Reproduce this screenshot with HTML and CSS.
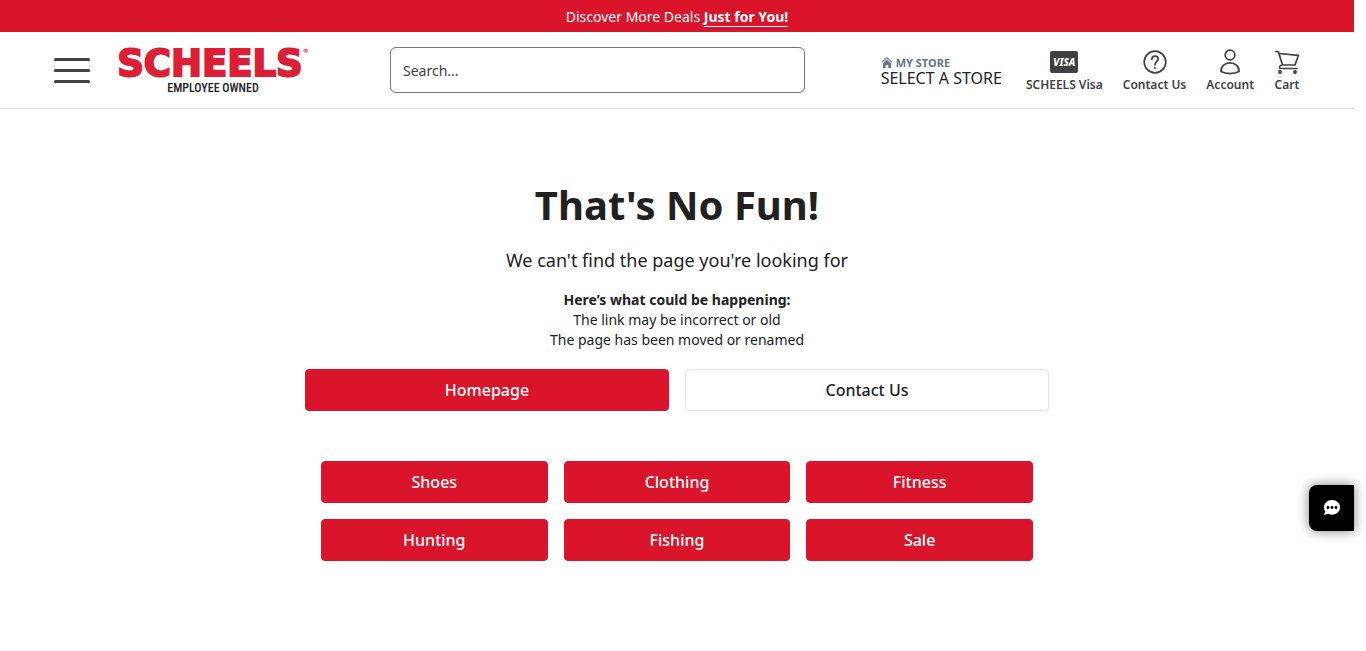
FILE: index.html
```html
<!DOCTYPE html>
<html lang="en">
<head>
<meta charset="utf-8">
<meta name="viewport" content="width=device-width, initial-scale=1">
<title>Page Not Found | SCHEELS</title>
<link rel="stylesheet" href="styles.css">
</head>
<body>
<div class="promo">Discover More Deals <a href="#">Just for You!</a></div>
<header class="header">
  <button class="menu" aria-label="Menu"><span></span><span></span><span></span></button>
  <a class="logo" href="#">
    <span class="logo-name">SCHEELS<sup>®</sup></span>
    <span class="logo-tag">EMPLOYEE OWNED</span>
  </a>
  <form class="search"><input type="text" placeholder="Search..." aria-label="Search"></form>
  <button class="store">
    <span class="store-label">
      <svg width="12" height="12" viewBox="0 0 12 12" fill="currentColor"><path d="M6 0 11.500 5 10.800 5.800 6 1.500 1.200 5.800 .5 5zM6 2.700l4 3.600V11H7.300V8H4.700v3H2V6.300z"/></svg>
      MY STORE
    </span>
    <span class="store-name">SELECT A STORE</span>
  </button>
  <nav class="nav">
    <a href="#">
      <span class="icon"><span class="visa">VISA</span></span>
      SCHEELS Visa
    </a>
    <a href="#">
      <svg width="28" height="28" viewBox="0 0 28 28" fill="none" stroke="#404042" stroke-width="1.700"><circle cx="14" cy="14" r="10.800"/><path d="M10.900 11.300C10.900 9.300 12.200 8.100 14 8.100 15.900 8.100 17.200 9.300 17.200 11 17.200 13.500 14 13.600 14 16.800" stroke-linecap="round"/><circle cx="14" cy="20" r="1" fill="#404042" stroke="none"/></svg>
      Contact Us
    </a>
    <a href="#">
      <svg width="28" height="28" viewBox="0 0 28 28" fill="none" stroke="#404042" stroke-width="1.700"><circle cx="14" cy="7" r="4.800"/><path d="M5 23.600C4.600 18.500 8.600 14.900 14 14.900S23.400 18.500 23 23.600C18 26.200 10 26.200 5 23.600Z" stroke-linejoin="round"/></svg>
      Account
    </a>
    <a href="#">
      <svg width="26" height="28" viewBox="2 0 26 28" fill="none" stroke="#404042" stroke-width="1.700" stroke-linecap="round" stroke-linejoin="round"><path d="M3.500 3.500H6.300L10.500 17M7 5.500 26.500 7.300 23 17H9.800C7 17.500 6.800 20.500 9 20.500H25"/><circle cx="8" cy="24" r="1.900" fill="#404042" stroke="none"/><circle cx="23" cy="24" r="1.900" fill="#404042" stroke="none"/></svg>
      Cart
    </a>
  </nav>
</header>
<main class="main">
  <h1>That's No Fun!</h1>
  <p class="lead">We can't find the page you're looking for</p>
  <p class="reasons"><strong>Here’s what could be happening:</strong><br>The link may be incorrect or old<br>The page has been moved or renamed</p>
  <div class="actions">
    <a class="btn" href="#">Homepage</a>
    <a class="btn btn-outline" href="#">Contact Us</a>
  </div>
  <div class="categories">
    <a class="btn" href="#">Shoes</a>
    <a class="btn" href="#">Clothing</a>
    <a class="btn" href="#">Fitness</a>
    <a class="btn" href="#">Hunting</a>
    <a class="btn" href="#">Fishing</a>
    <a class="btn" href="#">Sale</a>
  </div>
</main>
<button class="chat" aria-label="Chat">
  <svg width="18" height="18" viewBox="0 0 18 18"><path d="M9 1C13.600 1 17 4.200 17 8.300S13.600 15.700 9 15.700C7.600 15.700 6.300 15.400 5.200 14.800L1 16 2.200 12.400C1.400 11.200 1 9.800 1 8.300 1 4.200 4.400 1 9 1Z" fill="#fff"/><g fill="#000"><circle cx="5" cy="8.500" r="1.400"/><circle cx="9" cy="8.500" r="1.400"/><circle cx="13" cy="8.500" r="1.400"/></g></svg>
</button>
</body>
</html>
```
FILE: styles.css
```css
* { box-sizing: border-box; }
body {
  margin: 0;
  padding-right: 12px;
  background: #fff;
  color: #212121;
  font: 14px/20px "Noto Sans", sans-serif;
}
a { color: inherit; text-decoration: none; }
button { border: 0; padding: 0; background: none; color: inherit; font: inherit; cursor: pointer; }
svg { display: block; }

.promo {
  padding: 7px 16px 5px;
  background: #da142b;
  color: #fff;
  text-align: center;
}
.promo a { border-bottom: 1px solid #fff; font-weight: 700; }

.header {
  display: flex;
  align-items: center;
  height: 77px;
  padding: 0 54px;
  border-bottom: 1px solid #dcdcec;
}
.menu { display: flex; flex-direction: column; gap: 8px; width: 36px; }
.menu span { height: 3px; border-radius: 2px; background: #404042; }
.logo {
  display: flex;
  flex-direction: column;
  align-items: center;
  width: 198px;
  margin-left: 24px;
  padding-top: 3px;
  white-space: nowrap;
}
.logo-name {
  color: #dc1f34;
  font: 700 37px/32px "DejaVu Sans", sans-serif;
  -webkit-text-stroke: 2px #dc1f34;
}
.logo-name sup { font-size: 6px; line-height: 6px; vertical-align: top; -webkit-text-stroke: 0; }
.logo-tag {
  color: #212121;
  font: 500 12px/16px "Roboto Condensed", "Liberation Sans Narrow", "DejaVu Sans Condensed", sans-serif;
}
.search { flex: 1; margin: 0 76px 0 78px; }
.search input {
  display: block;
  width: 100%;
  height: 46px;
  padding: 0 12px;
  border: 1px solid #757575;
  border-radius: 6px;
  background: #fff;
  color: #212121;
  font: inherit;
}
.search input::placeholder { color: #404042; opacity: 1; }
.store { padding-top: 2px; text-align: left; white-space: nowrap; }
.store-label {
  display: flex;
  align-items: center;
  gap: 3px;
  color: #64748b;
  font-size: 11px;
  font-weight: 700;
  line-height: 14px;
}
.store-name { display: block; font-size: 16px; line-height: 17px; }
.nav { display: flex; gap: 20px; margin-left: 24px; padding-top: 2px; }
.nav a {
  display: flex;
  flex-direction: column;
  align-items: center;
  color: #404042;
  font-size: 12px;
  font-weight: 600;
  line-height: 18px;
  white-space: nowrap;
}
.icon { padding: 3px 0; }
.visa {
  display: block;
  width: 28px;
  border-radius: 2px;
  background: #404042;
  color: #fff;
  font-size: 10px;
  font-style: italic;
  font-weight: 800;
  line-height: 22px;
  text-align: center;
}

.main { max-width: 744px; margin: 0 auto; padding: 68px 0 48px; text-align: center; }
h1 { margin: 0; font-size: 40px; line-height: 56px; }
.lead { margin: 14px 0 16px; font-size: 18px; line-height: 27px; }
.reasons { margin: 0; }
.actions { display: grid; grid-template-columns: 1fr 1fr; gap: 16px; margin-top: 19px; }
.categories {
  display: grid;
  grid-template-columns: repeat(3, 1fr);
  gap: 16px;
  margin-top: 50px;
  padding: 0 16px;
}
.btn {
  padding: 8px 16px;
  border: 1px solid #da142b;
  border-radius: 4px;
  background: #da142b;
  color: #fff;
  font-size: 16px;
  font-weight: 500;
  line-height: 24px;
}
.btn-outline { border-color: #e5e5e5; background: #fff; color: #212121; }

.chat {
  position: fixed;
  right: 12px;
  bottom: 120px;
  display: flex;
  align-items: center;
  justify-content: center;
  width: 45px;
  height: 46px;
  border-radius: 8px 0 0 8px;
  background: #000;
  box-shadow: 0 0 12px rgba(0, 0, 0, 0.5);
}
```
